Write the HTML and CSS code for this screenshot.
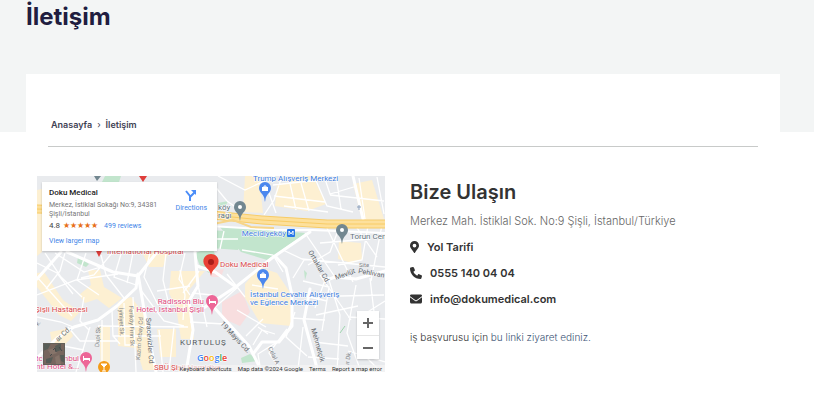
FILE: index.html
```
<!DOCTYPE html>
<html lang="tr">
<head>
    <meta charset="UTF-8">
    <meta name="viewport" content="width=device-width, initial-scale=1.0">
    <title>İletişim</title>
    <link rel="stylesheet" href="styles.css">
</head>
<body>
    <header class="page-header">
        <h1>İletişim</h1>
    </header>

    <main class="page-card">
        <nav class="breadcrumb">
            <a href="#">Anasayfa</a>
            <span class="separator">›</span>
            <span>İletişim</span>
        </nav>

        <div class="content">
            <!-- Harita -->
            <div class="map">
                <svg class="map-canvas" viewBox="0 0 348 196" preserveAspectRatio="xMidYMid slice">
                    <defs>
                        <g id="pin">
                            <path d="M0 10C-1 6 0 6-3 2C-5 0-6-2-6-4A6 6 0 0 1 6-4C6-2 5 0 3 2C0 6 1 6 0 10Z"/>
                        </g>
                    </defs>
                    <rect width="348" height="196" fill="#e9ebee"/>

                    <!-- bölgeler -->
                    <g fill="#fdf0d2">
                        <path d="M208 0H222L226 37L206 36Z"/>
                        <path d="M240 8L278 5L289 28L270 35L238 30Z"/>
                        <path d="M254 0H286L280 6H250ZM316 8L335 4L347 43L325 44Z"/>
                        <path d="M302 65L324 67L325 84L315 87L301 83Z"/>
                        <path d="M222 91L240 97L254 118V150L223 147L208 122V108Z"/>
                        <path d="M0 97L7 96L26 124L43 136L34 145L22 139L0 111Z"/>
                        <path d="M51 94H63L67 111L85 122L72 132L60 123L48 127L42 119L54 109Z"/>
                        <path d="M81 126L94 121L108 139L118 194H106L99 172L81 170Z"/>
                        <path d="M134 95H168L152 114L157 163H144L139 131L132 117Z"/>
                        <path d="M62 150H73V193H64ZM120 153H139V181H123ZM13 156L33 152L36 160L17 180Z"/>
                        <path d="M0 14L5 13V76L0 80ZM105 76L132 75L126 91H112Z"/>
                    </g>
                    <path d="M185 126L205 115L213 136L203 150L185 142ZM173 95L187 93L184 101H174Z" fill="#f8dedf"/>
                    <path d="M68 0H84L82 6H65ZM182 50L269 57L230 84L204 76ZM173 54L203 56L201 74L173 72ZM41 81L52 88L49 91L40 87ZM204 182L213 178L221 185L205 187ZM181 27L191 25L188 31H181ZM267 94L270 97L268 104Z" fill="#c2e5cd"/>
                    <path d="M158 77L175 71L182 88L172 97L163 90Z" fill="#c2e5cd"/>

                    <!-- ara sokaklar -->
                    <g fill="none" stroke="#fff" stroke-width="1.3">
                        <path d="M176 8L190 25L207 37M181 0L208 14L238 0M226 0L239 37M245 0L237 24L227 39M236 9L282 4M237 20L288 26M252 3L259 34M264 7L272 35M277 0L290 30L316 36M287 0L293 18L320 10M299 0L304 33M293 19L347 25M322 2L328 43M340 1L347 38M247 30L291 36"/>
                        <path d="M178 63H201M187 55L183 73M205 74L236 79L246 96M246 74L267 84L256 102M268 57L300 104M289 50L316 106M302 52L293 76L271 89M316 46L340 81M331 50L325 84L301 89M265 83L348 91M283 67L333 63M345 49L334 105"/>
                        <path d="M0 87L20 97L36 118M8 77L24 101L45 121M18 77L47 96L67 90M49 77L40 104L62 119M64 79L69 99L87 122M84 78L77 101L99 109M96 77L90 107M113 77L107 101L121 129M129 77L126 104L134 137M148 77L142 103L153 119M162 95L146 117M0 101L35 140M0 119L39 104L81 98M28 77L23 95L9 113M75 77L57 99L44 102"/>
                        <path d="M0 141L24 146L36 151M47 121L43 145L52 154M65 144V193M75 134L76 160L83 168M87 127L88 169H103M96 121L99 196M61 150L151 151M76 160H124M103 113L127 145L147 150M122 154L126 196M137 151L132 195M143 94L148 119L146 144M120 115L153 110M123 128L151 127M53 151L39 196M21 169L47 174M31 151L43 165L80 165"/>
                        <path d="M155 117L175 119M153 146L187 148M161 109L170 151M176 133L201 111M190 98L208 121M200 134L229 151M215 109L241 113M221 151L231 158M209 160L226 143M216 169L225 154L238 158M224 196L221 178L240 166M250 153L232 177L245 196M258 136L249 161L270 180M266 105L292 111L285 155M263 119L290 125M254 142L288 144M266 151L261 193M291 101L303 139L300 196M283 99L314 144M279 139L321 130M277 166L311 170M319 109L310 157L324 196M303 120L347 119M311 141L348 143M333 102L337 136M271 181L302 183M288 104L278 132M348 125L329 137M311 175L348 186M329 181L344 196"/>
                    </g>

                    <!-- ana caddeler -->
                    <g fill="none" stroke="#fff" stroke-linecap="round" stroke-linejoin="round">
                        <path d="M30 76L76 96L101 100L120 76M101 98L99 112L80 130L61 144L37 151L20 162L0 182M101 98L110 151L119 196M0 103L24 76M158 76L161 110L152 125L156 154L149 196" stroke-width="3"/>
                        <path d="M273 56L235 82L200 110L165 133M160 90L178 96L199 111M238 80L249 92L255 119V150L242 166H225L216 178M173 127L212 170L225 196M273 113L267 144L281 196M290 104L298 101L319 103L348 95M316 0L326 43" stroke-width="3"/>
                        <path d="M173 50L240 54L275 54L348 57" stroke-width="2"/>
                    </g>

                    <!-- otoyol -->
                    <path d="M0 33L80 36L175 39L225 44L290 48H348" fill="none" stroke="#fde09c" stroke-width="8"/>
                    <path d="M0 29L80 32L175 35L225 40L290 44H348M0 33L80 36L175 39L225 44L290 48H348M0 37L80 39L175 43L225 48L290 52H348" fill="none" stroke="#f8cc66" stroke-width="1"/>
                    <path d="M176 48L196 44L214 51L237 52" fill="none" stroke="#f7d588" stroke-width="2"/>

                    <!-- pinler -->
                    <g fill="#4b87ee">
                        <use href="#pin" x="228" y="16"/>
                        <use href="#pin" x="226" y="103"/>
                    </g>
                    <g fill="#728790">
                        <use href="#pin" x="203" y="35"/>
                        <use href="#pin" x="305" y="58"/>
                        <path d="M57 0H64L60 5Z"/>
                    </g>
                    <g fill="#ed6697">
                        <use href="#pin" x="175" y="129"/>
                        <use href="#pin" x="49" y="186"/>
                    </g>
                    <path d="M102 0H110L106 6ZM59 75H65L62 81Z" fill="#df3e3b"/>
                    <g fill="#fff">
                        <circle cx="203" cy="31" r="2"/>
                        <circle cx="305" cy="54" r="2"/>
                        <path d="M225 11H231V15H225ZM223 98H229V102H223Z"/>
                        <path d="M172 123H173V125H179V128H178V127H173V128H172ZM46 180H47V182H53V185H52V184H47V185H46Z"/>
                    </g>
                    <path d="M227 12V10H229V12M225 99V97H227V99" fill="none" stroke="#fff"/>
                    <circle cx="67" cy="191" r="6" fill="#f39b18"/>
                    <path d="M64 188H70L67 191ZM67 191V195M65 195H69" fill="#fff" stroke="#fff"/>
                    <path d="M174 100C173 94 171 94 168 90C164 84 168 78 174 78S184 84 180 90C177 94 175 94 174 100Z" fill="#e94235"/>
                    <circle cx="174" cy="86" r="3" fill="#a91c18"/>
                    <path d="M322 29V34M320 31H324" stroke="#8ba0bd" fill="none"/>
                    <path d="M303 157L308 150" stroke="#9fd6ae" fill="none"/>
                    <rect x="250" y="53" width="8" height="8" rx="1" fill="#2877e8"/>
                    <path d="M252 59V55L254 58L256 55V59" fill="none" stroke="#fff"/>

                    <!-- yer adları -->
                    <g class="label blue">
                        <text x="216" y="5">Trump Alışveriş Merkezi</text>
                        <text x="213" y="121">İstanbul Cevahir Alışveriş</text>
                        <text x="213" y="129">ve Eğlence Merkezi</text>
                        <text x="249" y="60" text-anchor="end">Mecidiyeköy</text>
                    </g>
                    <g class="label grey">
                        <text x="181" y="34">köy</text>
                        <text x="181" y="42">rağı</text>
                        <text x="313" y="63">Torun Center</text>
                    </g>
                    <g class="label red">
                        <text x="70" y="78">International Hospital</text>
                        <text x="183" y="91">Doku Medical</text>
                        <text x="-2" y="136">Şişli Hastanesi</text>
                        <text x="117" y="194">SBÜ Şişli Hamidiye</text>
                    </g>
                    <g class="label pink">
                        <text x="167" y="128" text-anchor="end">Radisson Blu</text>
                        <text x="167" y="136" text-anchor="end">Hotel, İstanbul Şişli</text>
                        <text x="42" y="185" text-anchor="end">Istanbul</text>
                        <text x="-1" y="185">tc</text>
                        <text x="-1" y="193">nti Hotel &amp;...</text>
                    </g>
                    <text class="district" x="143" y="169">KURTULUŞ</text>
                    <g class="street">
                        <text transform="translate(271 76) rotate(60)">Ortaklar Cd.</text>
                        <text transform="translate(299 104) rotate(-20)">Mevlüt</text>
                        <text transform="translate(321 97) rotate(10)">Pehlivan S</text>
                        <text transform="translate(183 148) rotate(47)">19 Mayıs Cd.</text>
                        <text transform="translate(274 153) rotate(74)">Mehmetçik</text>
                        <text transform="translate(109 142) rotate(86)">Sıracevizler Cd</text>
                        <text transform="translate(21 166) rotate(-43)">ar Cd.</text>
                    </g>
                    <g class="street small">
                        <text x="322" y="91">Site</text>
                        <text transform="translate(82 132) rotate(88)">İyiniyet Sk.</text>
                        <text transform="translate(92 130) rotate(88)">Feriköy Fırın Sk</text>
                        <text transform="translate(103 184) rotate(-86)">Kazım Orbay Cd</text>
                        <text transform="translate(62 171) rotate(-86)">Dupi Sk.</text>
                        <text transform="translate(231 172) rotate(65)">Celal A</text>
                        <text transform="translate(312 189) rotate(-80)">ır Dk.</text>
                        <text transform="translate(1 150) rotate(-50)">k.</text>
                    </g>
                    <text class="google" x="160" y="185"><tspan fill="#4285f4">G</tspan><tspan fill="#ea4335">o</tspan><tspan fill="#fbbc05">o</tspan><tspan fill="#4285f4">g</tspan><tspan fill="#34a853">l</tspan><tspan fill="#ea4335">e</tspan></text>
                </svg>

                <div class="place-card">
                    <div class="place-info">
                        <strong>Doku Medical</strong>
                        <p>Merkez, İstiklal Sokağı No:9, 34381 Şişli/İstanbul</p>
                        <div class="rating">
                            <span>4.8</span>
                            <span class="stars">★★★★★</span>
                            <a href="#">499 reviews</a>
                        </div>
                        <a href="#">View larger map</a>
                    </div>
                    <a class="directions" href="#">
                        <svg width="12" height="12" viewBox="0 0 12 12">
                            <path d="M5 12V7L1 2M5 8L10 3" fill="none" stroke="#4b8df8" stroke-width="2"/>
                            <path d="M6 1H11V6Z" fill="#4b8df8"/>
                        </svg>
                        Directions
                    </a>
                </div>

                <button class="satellite" aria-label="Uydu görüntüsü">
                    <svg width="22" height="22" viewBox="0 0 22 22">
                        <rect width="22" height="22" fill="#77665e"/>
                        <path d="M0 0H8L5 6L0 8ZM12 3L18 0V7L13 9ZM3 16L10 14L8 20H3ZM17 12H22V20L18 18Z" fill="#565c57"/>
                        <path d="M5 7L11 5L14 10L8 12ZM12 14L16 12L18 21H13Z" fill="#86746a"/>
                        <path d="M10 7L12 5L13 9M7 13L9 11M16 4L19 8" stroke="#45494a" fill="none"/>
                        <path d="M0 0H22V22H0Z" fill="none" stroke="#63605a" stroke-width="2"/>
                    </svg>
                </button>

                <div class="zoom">
                    <button aria-label="Yakınlaştır"><svg width="12" height="12" viewBox="0 0 12 12"><path d="M1 6H11M6 1V11" stroke="#666" stroke-width="2"/></svg></button>
                    <button aria-label="Uzaklaştır"><svg width="12" height="12" viewBox="0 0 12 12"><path d="M1 6H11" stroke="#666" stroke-width="2"/></svg></button>
                </div>

                <div class="attribution">
                    <a href="#">Keyboard shortcuts</a>
                    <span>Map data ©2024 Google</span>
                    <a href="#">Terms</a>
                    <a href="#">Report a map error</a>
                </div>
            </div>

            <!-- İletişim bilgileri -->
            <section class="contact">
                <h2>Bize Ulaşın</h2>
                <p class="address">Merkez Mah. İstiklal Sok. No:9 Şişli, İstanbul/Türkiye</p>
                <ul>
                    <li>
                        <a href="#">
                            <svg width="9" height="12" viewBox="0 0 384 512"><path fill="currentColor" d="M172 502C27 291 0 270 0 192a192 192 0 0 1 384 0c0 78-27 99-172 310a24 24 0 0 1-40 0ZM192 272a80 80 0 1 0 0-160 80 80 0 0 0 0 160Z"/></svg>
                            Yol Tarifi
                        </a>
                    </li>
                    <li>
                        <a href="tel:05551400404">
                            <svg width="12" height="12" viewBox="0 0 512 512"><path fill="currentColor" d="M165 25c-8-19-29-29-48-23L29 26C12 30 0 46 0 64c0 247 201 448 448 448 18 0 34-12 38-29l24-88c6-19-4-40-23-48l-96-40c-16-7-35-2-46 12l-41 49C234 334 178 278 144 207l49-40c14-11 19-30 12-46Z"/></svg>
                            0555 140 04 04
                        </a>
                    </li>
                    <li>
                        <a href="mailto:info@dokumedical.com">
                            <svg width="12" height="12" viewBox="0 0 512 512"><path fill="currentColor" d="M48 64a48 48 0 0 0-29 86l218 164c11 8 27 8 38 0l218-164a48 48 0 0 0-29-86ZM0 176v208c0 35 29 64 64 64h384c35 0 64-29 64-64V176L294 339a64 64 0 0 1-76 0Z"/></svg>
                            info@dokumedical.com
                        </a>
                    </li>
                </ul>
                <p class="career">iş başvurusu için <a href="#">bu linki ziyaret ediniz.</a></p>
            </section>
        </div>
    </main>
</body>
</html>
```
FILE: styles.css
```
* {
    box-sizing: border-box;
}
body {
    margin: 0;
    background: #fff;
    color: #333;
    font-family: Inter, sans-serif;
}
h1, h2, p, ul {
    margin: 0;
    padding: 0;
}
a {
    color: inherit;
    text-decoration: none;
}
button {
    padding: 0;
    border: none;
    background: none;
}
svg {
    display: block;
}
.page-header {
    height: 132px;
    padding: 0 26px;
    background: #f3f5f5;
}
.page-header h1 {
    color: #211d40;
    font-size: 24px;
    line-height: 34px;
    font-weight: 700;
}
.page-card {
    margin: -58px 34px 0 26px;
    padding-top: 42px;
    background: #fff;
}
.breadcrumb {
    display: flex;
    gap: 5px;
    margin: 0 22px;
    padding: 0 3px 12px;
    border-bottom: 1px solid #c8cac9;
    color: #3f4254;
    font-size: 9px;
    line-height: 18px;
    font-weight: 600;
}
.separator {
    font-weight: 400;
}
.content {
    display: grid;
    grid-template-columns: 1fr 1fr;
    gap: 25px;
    padding: 29px 22px 28px 11px;
}

/* harita */
.map {
    position: relative;
    height: 196px;
    overflow: hidden;
    font-family: Roboto, sans-serif;
}
.map-canvas {
    width: 100%;
    height: 100%;
}
.label {
    font-size: 8px;
    paint-order: stroke;
    stroke: #fff;
    stroke-width: 1px;
}
.blue {
    fill: #3b7bdc;
}
.grey {
    fill: #60717a;
}
.red {
    fill: #d8474b;
}
.pink {
    fill: #dd4c80;
}
.street {
    fill: #62676c;
    font-size: 7px;
}
.small {
    font-size: 6px;
    fill: #7d8286;
}
.district {
    fill: #555b60;
    font-size: 8px;
    letter-spacing: 1px;
}
.google {
    font-family: "Open Sans", sans-serif;
    font-size: 9px;
    font-weight: 600;
    paint-order: stroke;
    stroke: #fff;
    stroke-width: 1px;
}
.place-card {
    position: absolute;
    top: 6px;
    left: 5px;
    display: flex;
    justify-content: space-between;
    width: 175px;
    padding: 5px 10px 5px 7px;
    background: #fff;
    box-shadow: 0 1px 2px rgba(0, 0, 0, 0.2);
    color: #777;
    font-size: 7px;
    line-height: 9px;
}
.place-info {
    width: 116px;
}
.place-info strong {
    display: block;
    margin-bottom: 2px;
    color: #222;
    font-size: 8px;
    line-height: 12px;
    font-weight: 500;
}
.place-card a {
    color: #4285e8;
}
.rating {
    display: flex;
    gap: 3px;
    align-items: center;
    margin-bottom: 4px;
    line-height: 14px;
}
.rating span:first-child {
    color: #444;
    font-size: 8px;
}
.rating .stars {
    margin-right: 3px;
    color: #e7711b;
    font-size: 8px;
}
.directions {
    display: flex;
    flex-direction: column;
    align-items: center;
    gap: 3px;
    padding-top: 2px;
}
.satellite {
    position: absolute;
    left: 6px;
    bottom: 7px;
}
.zoom {
    position: absolute;
    right: 6px;
    bottom: 13px;
    width: 22px;
    background: #fff;
    box-shadow: 0 1px 2px rgba(0, 0, 0, 0.2);
}
.zoom button {
    display: flex;
    align-items: center;
    justify-content: center;
    width: 100%;
    height: 24px;
}
.zoom button + button {
    border-top: 1px solid #e6e6e6;
}
.attribution {
    position: absolute;
    right: 0;
    bottom: 0;
    display: flex;
    gap: 6px;
    padding: 0 3px 0 2px;
    background: rgba(245, 245, 245, 0.7);
    color: #333;
    font-size: 6px;
    line-height: 7px;
    white-space: nowrap;
}

/* iletişim */
.contact h2 {
    font-size: 20px;
    line-height: 32px;
    font-weight: 600;
}
.address {
    margin-bottom: 6px;
    color: #666;
    font-size: 11px;
    line-height: 26px;
    font-weight: 300;
}
.contact ul {
    list-style: none;
}
.contact li {
    margin-bottom: 12px;
    font-size: 11px;
    line-height: 14px;
    font-weight: 600;
}
.contact li a {
    display: flex;
    gap: 8px;
    align-items: center;
}
.career {
    padding-top: 10px;
    font-size: 10px;
    line-height: 18px;
    font-weight: 300;
}
.career a {
    color: #3c5374;
}
```
